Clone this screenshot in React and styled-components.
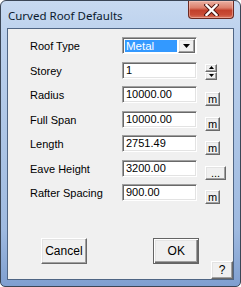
import React from 'react';
import styled, { createGlobalStyle } from 'styled-components';

const GlobalStyle = createGlobalStyle`
    html, body {
        margin: 0;
        padding: 0;
        background: #ffffff;
    }
    * {
        box-sizing: border-box;
    }
`;

const Window = styled.div`
    width: 241px;
    height: 287px;
    border: 1px solid #3b4656;
    border-radius: 6px 6px 5px 5px;
    padding: 0 6px 6px 6px;
    display: flex;
    flex-direction: column;
    background: linear-gradient(180deg, #c8daf1 0%, #bcd1ed 12%, #aec6e6 45%, #9fbae0 80%, #7f9fd0 100%);
    overflow: hidden;
`;

const TitleBar = styled.div`
    height: 27px;
    display: flex;
    justify-content: space-between;
    align-items: flex-start;
`;

const Title = styled.div`
    font-family: "Noto Sans", "Liberation Sans", sans-serif;
    font-size: 11.5px;
    line-height: 16px;
    color: #0b1a2e;
    padding: 7px 0 0 1px;
    white-space: nowrap;
`;

const CloseButton = styled.div`
    width: 46px;
    height: 18px;
    border: 1px solid #6b2a22;
    border-top: none;
    border-radius: 0 0 4px 4px;
    background: linear-gradient(180deg, #eab0a2 0%, #dc7f6b 40%, #c2402b 55%, #c94c36 80%, #d8765f 100%);
    box-shadow: inset 0 0 0 1px rgba(255, 210, 200, 0.45);
    display: flex;
    align-items: center;
    justify-content: center;
`;

const Client = styled.div`
    flex: 1;
    border: 1px solid #4f6584;
    background: #f0f0f0;
    display: flex;
    flex-direction: column;
    font-family: "Liberation Sans", Arial, sans-serif;
    font-size: 11px;
    color: #000;
`;

const Form = styled.div`
    padding: 8px 0 0 22px;
    display: flex;
    flex-direction: column;
    gap: 7.5px;
`;

const Row = styled.div`
    display: flex;
    align-items: flex-start;
    height: 17px;
`;

const Label = styled.div`
    width: 92px;
    line-height: 17px;
    padding-top: 1px;
    white-space: nowrap;
`;

const sunken = `
    border: 1px solid;
    border-color: #a0a0a0 #ffffff #ffffff #a0a0a0;
    box-shadow: inset 1px 1px 0 #696969, inset -1px -1px 0 #e3e3e3;
`;

const raised = `
    border: 1px solid;
    border-color: #ffffff #696969 #696969 #ffffff;
    box-shadow: inset -1px -1px 0 #a0a0a0, inset 1px 1px 0 #e3e3e3;
    background: #f0f0f0;
`;

const Field = styled.div`
    width: 75px;
    height: 17px;
    ${sunken}
    background: #ffffff;
    padding: 0 0 0 3px;
    line-height: 14px;
    white-space: nowrap;
    overflow: hidden;
`;

const Combo = styled.div`
    width: 75px;
    height: 17px;
    border: 1px solid;
    border-color: #a0a0a0 #ffffff #ffffff #a0a0a0;
    background: #ffffff;
    padding: 1px 1px 0 1px;
    display: flex;
    box-shadow: inset 1px 1px 0 #696969;
`;

const Selected = styled.div`
    flex: 1;
    margin: 1px 1px 1px 1px;
    background: #3399ff;
    color: #ffffff;
    padding-left: 1px;
    line-height: 12px;
    font-size: 11.5px;
`;

const DropButton = styled.div`
    width: 17px;
    ${raised}
    display: flex;
    align-items: center;
    justify-content: center;
`;

const SmallButton = styled.div`
    width: ${(p) => p.$w || 15}px;
    height: 14px;
    margin: 6px 0 0 8px;
    ${raised}
    display: flex;
    align-items: center;
    justify-content: center;
    line-height: 12px;
    font-size: 11px;
`;

const Spin = styled.div`
    width: 12px;
    height: 16px;
    margin: 2px 0 0 8px;
    display: flex;
    flex-direction: column;
`;

const SpinHalf = styled.div`
    flex: 1;
    ${raised}
    display: flex;
    align-items: center;
    justify-content: center;
`;

const Footer = styled.div`
    flex: 1;
    margin-top: 37px;
    padding-left: 33px;
    display: flex;
`;

const PushButton = styled.div`
    width: 46px;
    height: 26px;
    ${raised}
    display: flex;
    align-items: center;
    justify-content: center;
    font-size: 12px;
    ${(p) => p.$default && `
        border: 1px solid #646464;
        box-shadow: inset 1px 1px 0 #ffffff, inset -1px -1px 0 #696969, inset -2px -2px 0 #a0a0a0, inset 2px 2px 0 #e3e3e3;
    `}
`;

const HelpButton = styled.div`
    width: 22px;
    height: 18px;
    margin-left: 12px;
    align-self: flex-end;
    ${raised}
    display: flex;
    align-items: center;
    justify-content: center;
    font-size: 12px;
`;

const Gap = styled.div`
    width: 67px;
`;

const Arrow = ({ up, size = 7 }) => (
    <svg width={size} height={Math.ceil(size / 2)} viewBox={`0 0 ${size} ${Math.ceil(size / 2)}`}>
        {up ? (
            <polygon points={`${size / 2},0 ${size},${Math.ceil(size / 2)} 0,${Math.ceil(size / 2)}`} fill="#000" />
        ) : (
            <polygon points={`0,0 ${size},0 ${size / 2},${Math.ceil(size / 2)}`} fill="#000" />
        )}
    </svg>
);

const CloseX = () => (
    <svg width="15" height="12" viewBox="0 0 15 12">
        <path d="M2.5 1 L12.5 11 M12.5 1 L2.5 11" stroke="#4a1410" strokeWidth="4.2" strokeLinecap="square" />
        <path d="M2.5 1 L12.5 11 M12.5 1 L2.5 11" stroke="#ffffff" strokeWidth="2.4" strokeLinecap="square" />
    </svg>
);

const rows = [
    { label: 'Storey', value: '1', kind: 'spin' },
    { label: 'Radius', value: '10000.00', kind: 'm' },
    { label: 'Full Span', value: '10000.00', kind: 'm' },
    { label: 'Length', value: '2751.49', kind: 'm' },
    { label: 'Eave Height', value: '3200.00', kind: 'dots' },
    { label: 'Rafter Spacing', value: '900.00', kind: 'm' },
];

export default function App() {
    return (
        <>
            <GlobalStyle />
            <Window>
                <TitleBar>
                    <Title>Curved Roof Defaults</Title>
                    <CloseButton><CloseX /></CloseButton>
                </TitleBar>
                <Client>
                    <Form>
                        <Row>
                            <Label>Roof Type</Label>
                            <Combo>
                                <Selected>Metal</Selected>
                                <DropButton><Arrow size={7} /></DropButton>
                            </Combo>
                        </Row>
                        {rows.map((r) => (
                            <Row key={r.label}>
                                <Label>{r.label}</Label>
                                <Field>{r.value}</Field>
                                {r.kind === 'spin' && (
                                    <Spin>
                                        <SpinHalf><Arrow up size={5} /></SpinHalf>
                                        <SpinHalf><Arrow size={5} /></SpinHalf>
                                    </Spin>
                                )}
                                {r.kind === 'm' && <SmallButton>m</SmallButton>}
                                {r.kind === 'dots' && <SmallButton $w={21}>...</SmallButton>}
                            </Row>
                        ))}
                    </Form>
                    <Footer>
                        <PushButton>Cancel</PushButton>
                        <Gap />
                        <PushButton $default>OK</PushButton>
                        <HelpButton>?</HelpButton>
                    </Footer>
                </Client>
            </Window>
        </>
    );
}
